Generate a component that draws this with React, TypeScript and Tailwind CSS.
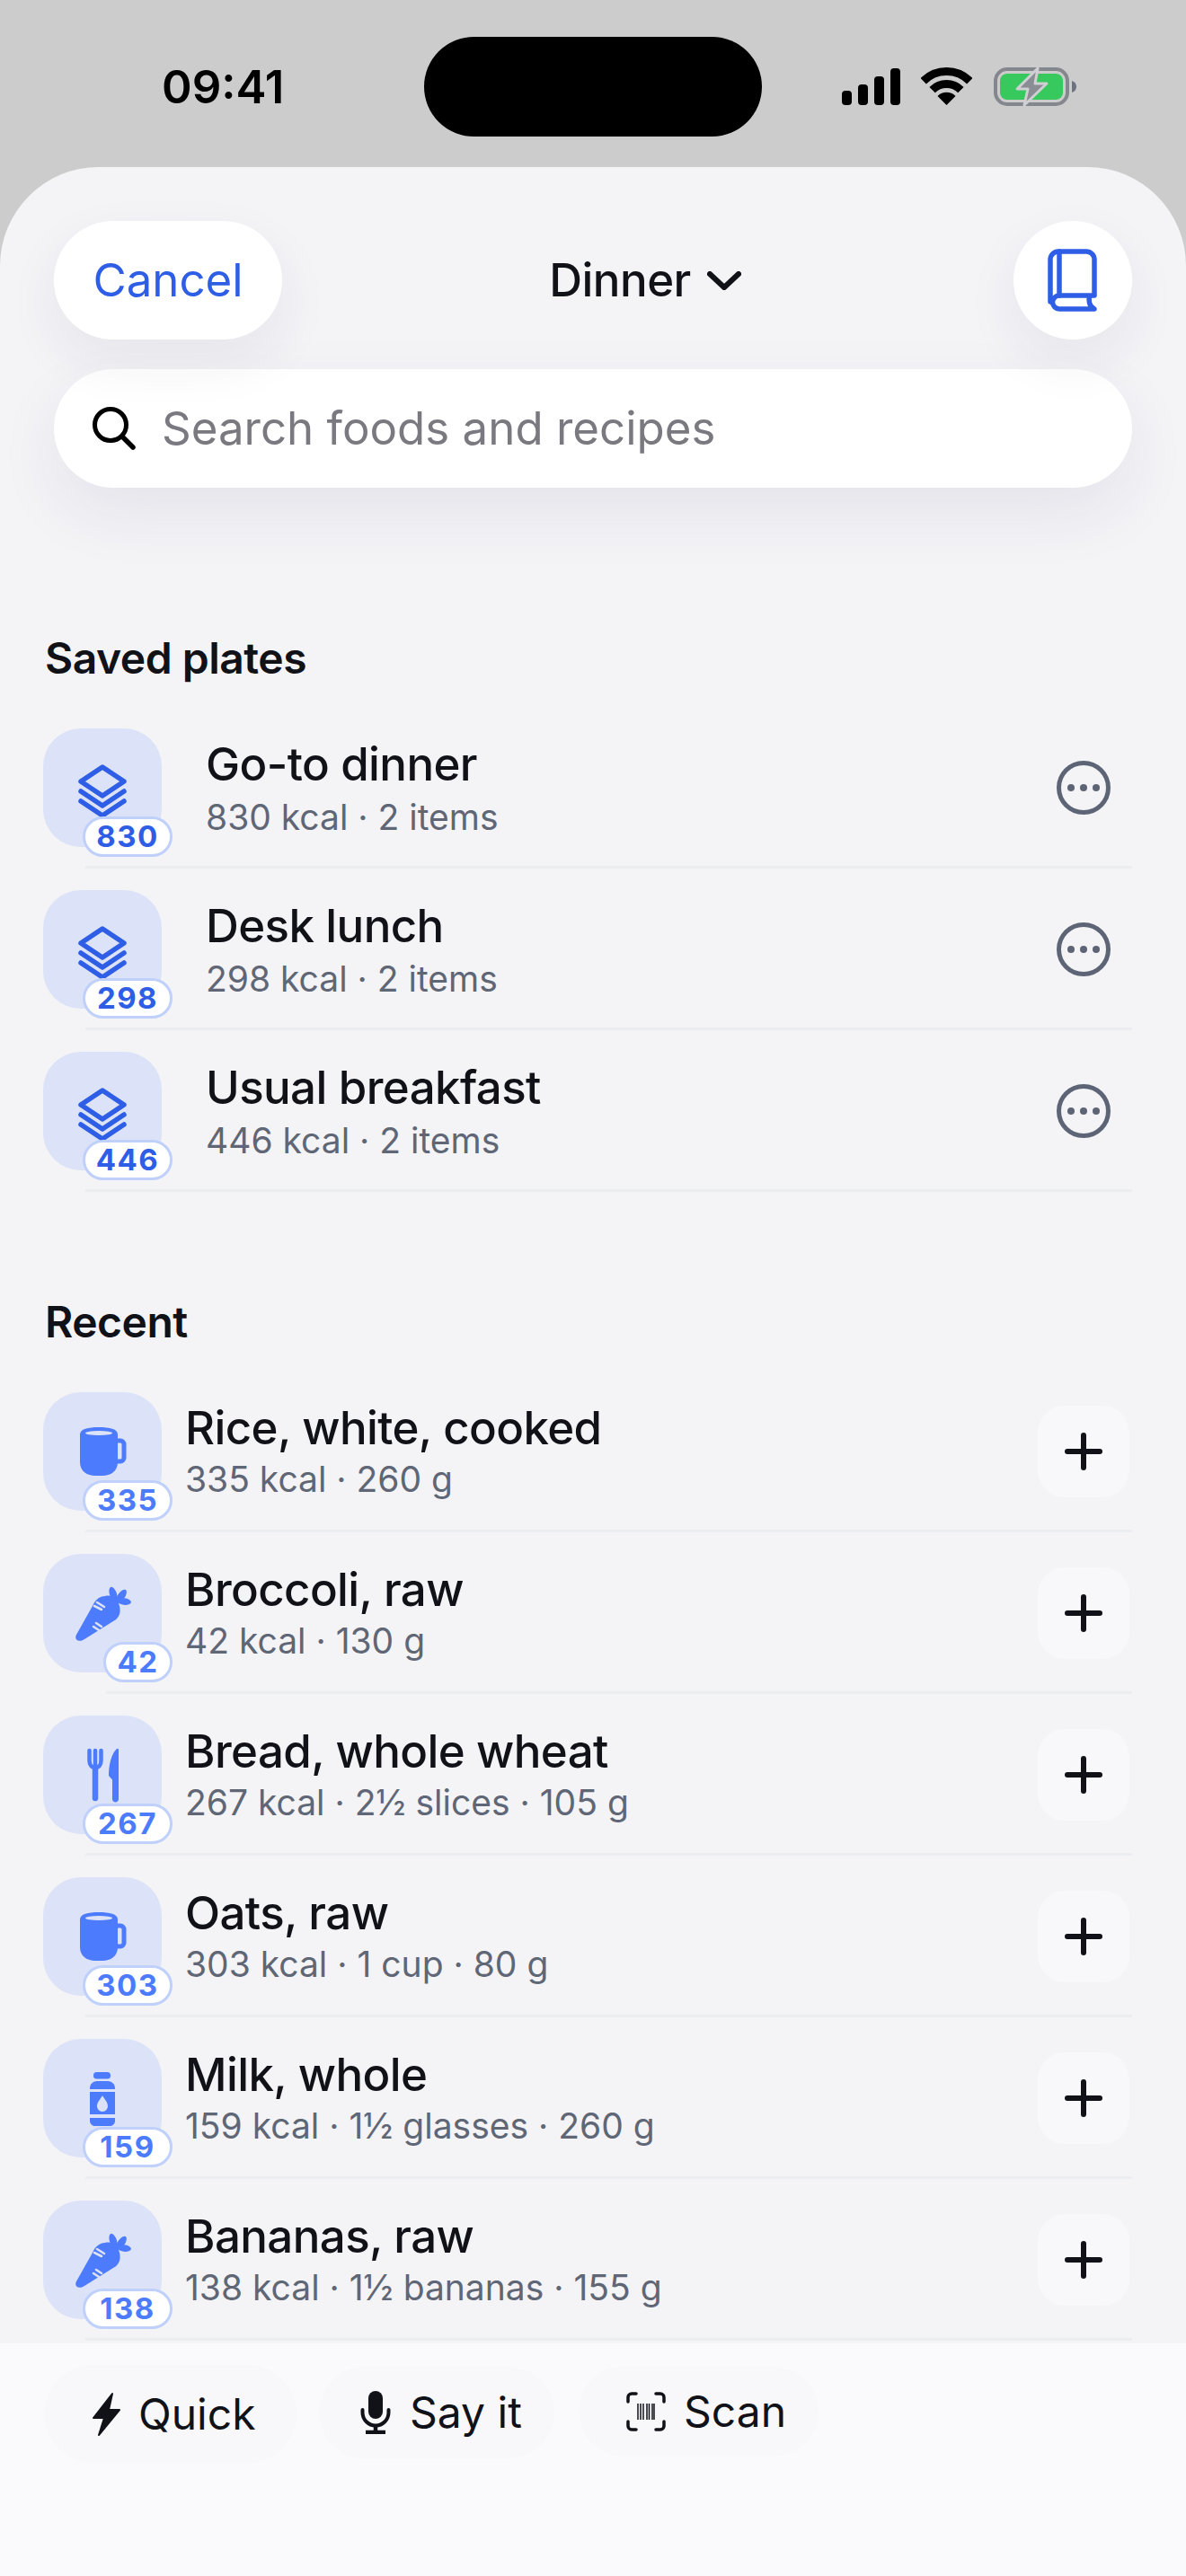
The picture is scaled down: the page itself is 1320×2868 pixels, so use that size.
import React from "react";

const saved = [
  { title: "Go-to dinner", sub: "830 kcal · 2 items", badge: "830" },
  { title: "Desk lunch", sub: "298 kcal · 2 items", badge: "298" },
  { title: "Usual breakfast", sub: "446 kcal · 2 items", badge: "446" },
];

type Kind = "mug" | "carrot" | "cutlery" | "bottle";

const recent: { title: string; sub: string; badge: string; icon: Kind }[] = [
  { title: "Rice, white, cooked", sub: "335 kcal · 260 g", badge: "335", icon: "mug" },
  { title: "Broccoli, raw", sub: "42 kcal · 130 g", badge: "42", icon: "carrot" },
  { title: "Bread, whole wheat", sub: "267 kcal · 2½ slices · 105 g", badge: "267", icon: "cutlery" },
  { title: "Oats, raw", sub: "303 kcal · 1 cup · 80 g", badge: "303", icon: "mug" },
  { title: "Milk, whole", sub: "159 kcal · 1½ glasses · 260 g", badge: "159", icon: "bottle" },
  { title: "Bananas, raw", sub: "138 kcal · 1½ bananas · 155 g", badge: "138", icon: "carrot" },
];

function FoodIcon({ kind }: { kind: Kind | "layers" }) {
  const c = "#4c7bfd";
  const bg = "#dce2f7";
  return (
    <svg viewBox="0 0 132 132" className="w-[132px] h-[132px] block">
      {kind === "layers" && (
        <g fill="none" stroke="#2f5ee6" strokeWidth="5.5" strokeLinejoin="round" strokeLinecap="round">
          <path d="M66 43 L90 59 L66 75 L42 59 Z" />
          <path d="M42 70 L66 86 L90 70" />
          <path d="M42 81 L66 97 L90 81" />
        </g>
      )}
      {kind === "mug" && (
        <g>
          <path fill={c} d="M41 47 C41 41 50 39 62 39 C74 39 83 41 83 47 V78 C83 88 75 93 66 93 H58 C49 93 41 88 41 78 Z" />
          <path fill="none" stroke={c} strokeWidth="5" d="M82 54 h4 a4 4 0 0 1 4 4 v15 a4 4 0 0 1 -4 4 h-4" />
          <ellipse cx="62" cy="45.5" rx="15" ry="2.6" fill={bg} />
        </g>
      )}
      {kind === "carrot" && (
        <g>
          <path fill={c} d="M37 90 L55 58 C58 51 63 47 69 47 C76 45 83 50 85 58 C87 66 84 72 78 75 L46 95 C40 99 34 96 37 90 Z" />
          <ellipse cx="78" cy="45" rx="4" ry="8.5" fill={c} transform="rotate(-18 78 45)" />
          <ellipse cx="87" cy="47" rx="4" ry="8.5" fill={c} transform="rotate(35 87 47)" />
          <ellipse cx="90" cy="53" rx="8" ry="3.8" fill={c} transform="rotate(6 90 53)" />
          <g stroke={bg} strokeWidth="2.6" strokeLinecap="round">
            <path d="M60 54 L68 59" />
            <path d="M57 58 L65 62" />
            <path d="M56 81 L62 85" />
            <path d="M59 77 L65 81" />
          </g>
        </g>
      )}
      {kind === "cutlery" && (
        <g>
          <g fill="none" stroke={c} strokeLinecap="round">
            <path strokeWidth="4.5" d="M51.5 39 V50 C51.5 55 54 58 58 58 C62 58 64.5 55 64.5 50 V39" />
            <path strokeWidth="4.5" d="M58 39 V58" />
            <path strokeWidth="6.5" d="M58 58 V92" />
          </g>
          <path fill={c} d="M84 38 C84 36.500 82.500 36.500 81.500 37.500 C76 43 73 55 73 67 L77 71.500 V93 C77 97.500 84 97.500 84 93 Z" />
        </g>
      )}
      {kind === "bottle" && (
        <g fill={c}>
          <rect x="56" y="37" width="19" height="7.500" rx="3.500" />
          <path d="M52 56 V55 C52 50 56 47 60 47 H72 C76 47 80 50 80 55 V56 Z" />
          <rect x="52" y="59" width="28" height="25" />
          <path d="M52 88 H80 V91 C80 95 77 97 74 97 H58 C55 97 52 95 52 91 Z" />
          <path fill={bg} d="M66 63 C68 67 72 70 72 75 A6 6 0 0 1 60 75 C60 70 64 67 66 63 Z" />
        </g>
      )}
    </svg>
  );
}

function Badge({ value, dark }: { value: string; dark: boolean }) {
  return (
    <div
      className={`absolute right-[-12px] bottom-[-11px] h-[45px] ${value.length > 2 ? "w-[100px]" : "w-[77px]"} rounded-full bg-white border-[3px] border-[#bfd0fb] flex items-center justify-center text-[33px] leading-none font-bold tracking-[1.5px] ${dark ? "text-[#2f5ee6]" : "text-[#4c7bfd]"}`}
    >
      {value}
    </div>
  );
}

function Row({
  title,
  sub,
  badge,
  icon,
  saved: isSaved,
}: {
  title: string;
  sub: string;
  badge: string;
  icon: Kind | "layers";
  saved: boolean;
}) {
  return (
    <div>
      <div className="h-[177px] pl-[48px] pr-[63px] pt-[24px] flex items-start">
        <div className="relative w-[132px] h-[132px] rounded-[42px] bg-[#dce2f7] shrink-0">
          <FoodIcon kind={icon} />
          <Badge value={badge} dark={isSaved} />
        </div>
        <div className={`flex-1 flex flex-col pt-[8px] ${isSaved ? "ml-[49px]" : "ml-[26px]"}`}>
          <div className="text-[51px] leading-[64px] font-medium text-[#101218] tracking-[-0.6px]">{title}</div>
          <div className={`text-[39px] leading-[52px] text-[#5f6675] ${isSaved ? "mt-[1px]" : "mt-[-1px]"}`}>{sub}</div>
        </div>
        <div className="w-[102px] h-[102px] mt-[15px] rounded-[30px] flex items-center justify-center shrink-0 bg-transparent">
          {isSaved ? (
            <svg viewBox="0 0 60 60" className="w-[60px] h-[60px]">
              <circle cx="30" cy="30" r="27.500" fill="none" stroke="#5c6475" strokeWidth="5" />
              <circle cx="16" cy="30" r="4" fill="#5c6475" />
              <circle cx="30" cy="30" r="4" fill="#5c6475" />
              <circle cx="44" cy="30" r="4" fill="#5c6475" />
            </svg>
          ) : (
            <div className="w-[102px] h-[102px] rounded-[30px] bg-[#f8f8fa] flex items-center justify-center">
              <svg viewBox="0 0 42 42" className="w-[42px] h-[42px]">
                <path d="M21 3 V39 M3 21 H39" fill="none" stroke="#101218" strokeWidth="6" strokeLinecap="round" />
              </svg>
            </div>
          )}
        </div>
      </div>
      <div className={`h-[3px] bg-[#ecedf0] mr-[60px] ${badge.length > 2 ? "ml-[95px]" : "ml-[118px]"}`} />
    </div>
  );
}

export default function App() {
  return (
    <div className="w-[1320px] h-[2868px] overflow-hidden bg-[#cccccc] flex flex-col font-[Inter,sans-serif]">
      {/* status bar */}
      <div className="h-[186px] shrink-0 grid grid-cols-[472px_376px_1fr]">
        <div className="pl-[180px] pt-[64px] text-[51px] leading-[66px] font-semibold text-black">09:41</div>
        <div className="mt-[41px] h-[111px] rounded-full bg-black" />
        <div className="pl-[89px] pt-[75px] flex items-start">
          <svg viewBox="0 0 65 41" className="w-[65px] h-[41px] mt-[1px]">
            <rect x="0" y="25" width="11" height="16" rx="4" />
            <rect x="18" y="18" width="11" height="23" rx="4" />
            <rect x="36" y="9" width="11" height="32" rx="4" />
            <rect x="54" y="0" width="11" height="41" rx="4" />
          </svg>
          <svg viewBox="0 0 57 42" className="w-[57px] h-[42px] ml-[23px]">
            <path d="M2.700 15.200 A36.500 36.500 0 0 1 54.300 15.200" fill="none" stroke="#000" strokeWidth="9" />
            <path d="M12.600 25.100 A22.500 22.500 0 0 1 44.400 25.100" fill="none" stroke="#000" strokeWidth="9" />
            <path d="M28.500 42 L18.500 32 A14 14 0 0 1 38.500 32 Z" fill="#000" />
          </svg>
          <svg viewBox="0 0 92 43" className="w-[92px] h-[43px] ml-[24px] overflow-visible">
            <rect x="2" y="2" width="80" height="39" rx="13" fill="none" stroke="#85878e" strokeWidth="4" />
            <rect x="7" y="7" width="70" height="29" rx="8" fill="#37c95e" />
            <path d="M87 15 C90 16 92 18 92 21.500 C92 25 90 27 87 28 Z" fill="#6b7280" />
            <path d="M49 1 L26 24 H38 L34 42 L59 18 H46 Z" fill="#8b8d94" stroke="#cfd0d3" strokeWidth="3" strokeLinejoin="round" />
          </svg>
        </div>
      </div>

      {/* sheet */}
      <div className="flex-1 min-h-0 overflow-hidden rounded-t-[110px] bg-[#f4f4f7]">
        <div className="h-[2423px] overflow-hidden">
          <div className="px-[60px] pt-[60px]">
            <div className="flex items-center justify-between">
              <div className="w-[254px] h-[132px] rounded-full bg-white shadow-[0_24px_60px_rgba(40,40,90,0.07)] flex items-center justify-center text-[51px] text-[#2f5ee6]">
                Cancel
              </div>
              <div className="flex items-center text-[51px] font-medium text-[#101218] tracking-[-0.5px] pr-[6px]">
                Dinner
                <svg viewBox="0 0 38 21" className="w-[38px] h-[21px] ml-[18px]">
                  <path d="M3 3 L19 18 L35 3" fill="none" stroke="#101218" strokeWidth="6" strokeLinecap="round" strokeLinejoin="round" />
                </svg>
              </div>
              <div className="w-[132px] h-[132px] rounded-full bg-white shadow-[0_24px_60px_rgba(40,40,90,0.07)] flex items-center justify-center">
                <svg viewBox="0 0 55 70" className="w-[55px] h-[70px]">
                  <g fill="none" stroke="#2f5ee6" strokeWidth="5.500" strokeLinecap="round" strokeLinejoin="round">
                    <path d="M3 59 V12 A9 9 0 0 1 12 3 H43 A9 9 0 0 1 52 12 V50" />
                    <path d="M13 3 V52" />
                    <path d="M52 52 H13 A7.500 7.500 0 0 0 13 67 H52 C46 64 45 57 47 52" />
                  </g>
                </svg>
              </div>
            </div>
            <div className="mt-[33px] h-[132px] rounded-full bg-white shadow-[0_28px_70px_rgba(40,40,90,0.08)] flex items-center pl-[43px]">
              <svg viewBox="0 0 48 48" className="w-[48px] h-[48px]">
                <circle cx="20" cy="20" r="17.500" fill="none" stroke="#000" strokeWidth="5" />
                <path d="M33 33 L45 45" stroke="#000" strokeWidth="5.500" strokeLinecap="round" />
              </svg>
              <span className="ml-[29px] text-[51px] text-[#79797f]">Search foods and recipes</span>
            </div>
          </div>

          <h2 className="mt-[160px] ml-[50px] mb-[24px] text-[48px] leading-[60px] font-semibold text-[#101218] tracking-[-0.5px]">
            Saved plates
          </h2>
          {saved.map((r) => (
            <Row key={r.title} {...r} icon="layers" saved />
          ))}

          <h2 className="mt-[115px] ml-[50px] mb-[24px] text-[48px] leading-[60px] font-semibold text-[#101218] tracking-[-0.5px]">
            Recent
          </h2>
          {recent.map((r) => (
            <Row key={r.title} {...r} saved={false} />
          ))}
        </div>
      </div>

      {/* bottom bar */}
      <div className="h-[259px] shrink-0 bg-[#fafafc] flex items-start pl-[49px] text-[48px] text-[#101218]">
        <div className="mt-[24px] w-[281px] h-[109px] rounded-full bg-[#f8f8fa] flex items-center pl-[53px]">
          <svg viewBox="0 0 33 50" className="w-[33px] h-[50px]">
            <path d="M23 2 L2 29 H14 L8 48 L31 20 H19 Z" fill="#101218" stroke="#101218" strokeWidth="2" strokeLinejoin="round" />
          </svg>
          <span className="ml-[19px]">Quick</span>
        </div>
        <div className="mt-[26px] ml-[25px] w-[262px] h-[102px] rounded-full bg-[#f8f8fa] flex items-center pl-[46px]">
          <svg viewBox="0 0 34 48" className="w-[34px] h-[48px]">
            <rect x="9" y="0" width="16" height="31" rx="8" fill="#101218" />
            <path d="M2.500 21 V24 A14.500 14.500 0 0 0 31.500 24 V21" fill="none" stroke="#101218" strokeWidth="4" strokeLinecap="round" />
            <path d="M17 38 V45 M6 46 H28" fill="none" stroke="#101218" strokeWidth="4.500" />
          </svg>
          <span className="ml-[21px]">Say it</span>
        </div>
        <div className="mt-[26px] ml-[27px] w-[267px] h-[99px] rounded-full bg-[#f8f8fa] flex items-center pl-[53px]">
          <svg viewBox="0 0 44 44" className="w-[44px] h-[44px]">
            <path d="M11 2 H6 A4 4 0 0 0 2 6 V11 M33 2 H38 A4 4 0 0 1 42 6 V11 M11 42 H6 A4 4 0 0 1 2 38 V33 M33 42 H38 A4 4 0 0 0 42 38 V33" fill="none" stroke="#101218" strokeWidth="3.500" strokeLinecap="round" />
            <path d="M13 13 V31 M16 13 V31 M19 13 V31 M23 13 V31 M25.500 13 V31 M29 13 V31 M31 13 V31" stroke="#101218" strokeWidth="1.500" />
          </svg>
          <span className="ml-[20px]">Scan</span>
        </div>
      </div>
    </div>
  );
}
